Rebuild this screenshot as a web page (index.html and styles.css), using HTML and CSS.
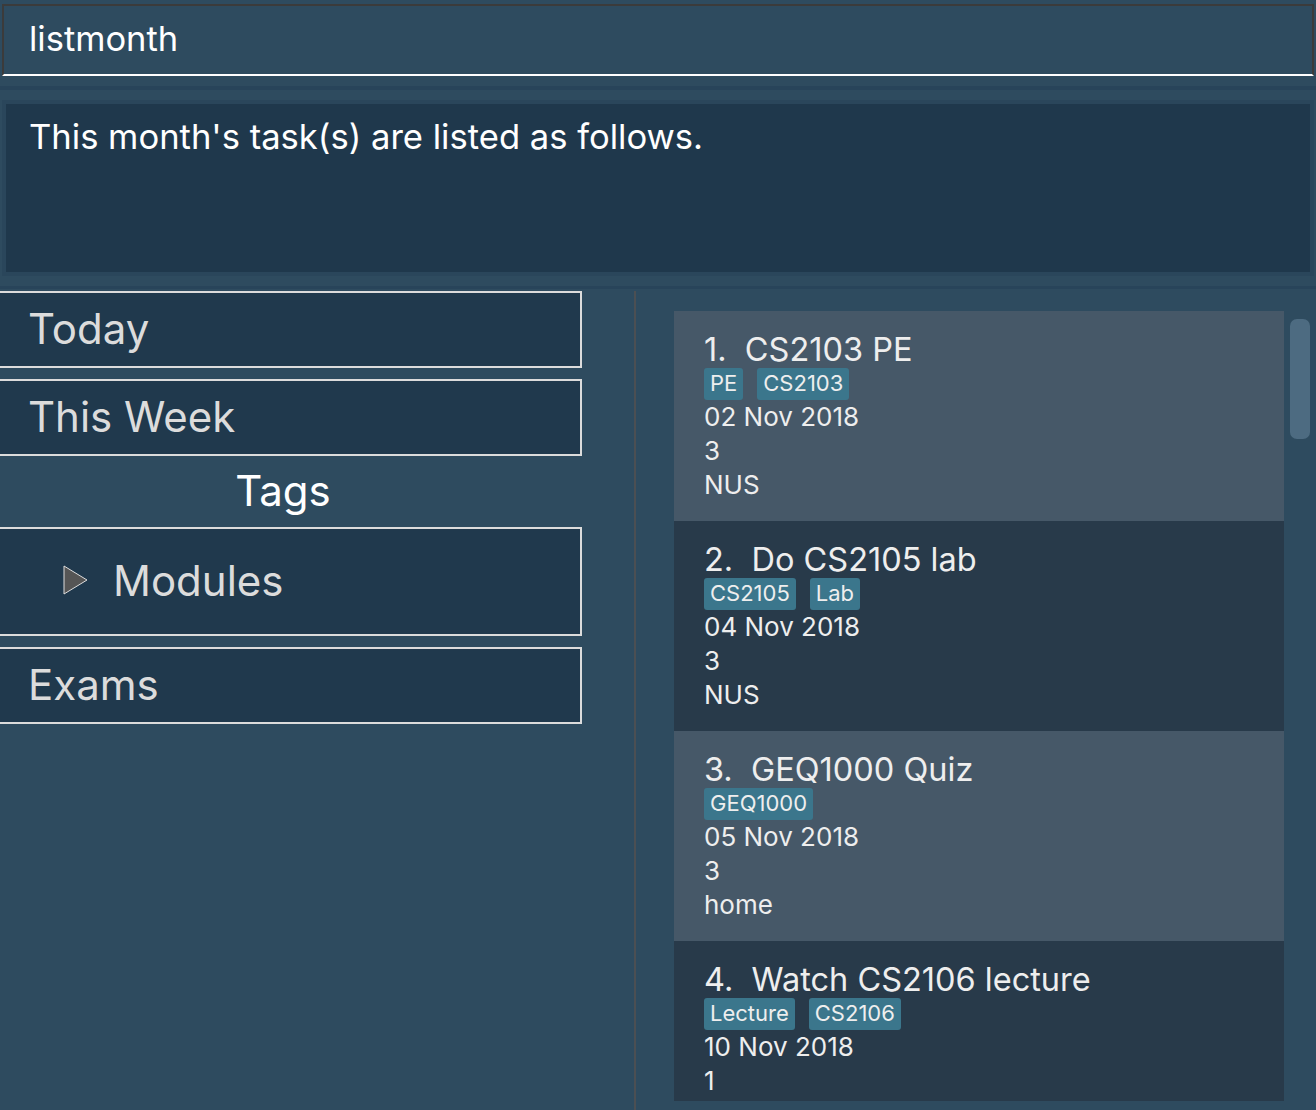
FILE: index.html
```html
<!DOCTYPE html>
<html>
<head>
<meta charset="utf-8">
<link rel="stylesheet" href="styles.css">
</head>
<body>
<div class="command">listmonth</div>
<div class="band"></div>
<div class="result">This month's task(s) are listed as follows.</div>
<div class="band band2"></div>
<div class="main">
  <div class="left">
    <div class="navbox">Today</div>
    <div class="navbox">This Week</div>
    <div class="tags-label">Tags</div>
    <div class="navbox tree">
      <svg class="arrow" width="26" height="30" viewBox="0 0 26 30"><polygon points="1,1 24,15 1,29" fill="#555555" stroke="#dddddd" stroke-width="1"/></svg>
      <span>Modules</span>
    </div>
    <div class="navbox">Exams</div>
  </div>
  <div class="divider"></div>
  <div class="right">
    <div class="list">
      <div class="card odd">
        <div class="title">1.&nbsp;&nbsp;CS2103 PE</div>
        <div class="tags"><span class="tag">PE</span><span class="tag">CS2103</span></div>
        <div class="line">02 Nov 2018</div>
        <div class="line">3</div>
        <div class="line">NUS</div>
      </div>
      <div class="card even">
        <div class="title">2.&nbsp;&nbsp;Do CS2105 lab</div>
        <div class="tags"><span class="tag">CS2105</span><span class="tag">Lab</span></div>
        <div class="line">04 Nov 2018</div>
        <div class="line">3</div>
        <div class="line">NUS</div>
      </div>
      <div class="card odd">
        <div class="title">3.&nbsp;&nbsp;GEQ1000 Quiz</div>
        <div class="tags"><span class="tag">GEQ1000</span></div>
        <div class="line">05 Nov 2018</div>
        <div class="line">3</div>
        <div class="line">home</div>
      </div>
      <div class="card even">
        <div class="title">4.&nbsp;&nbsp;Watch CS2106 lecture</div>
        <div class="tags"><span class="tag">Lecture</span><span class="tag">CS2106</span></div>
        <div class="line">10 Nov 2018</div>
        <div class="line">1</div>
      </div>
    </div>
    <div class="scrollbar"><div class="thumb"></div></div>
  </div>
</div>
</body>
</html>
```

FILE: styles.css
```css
html, body {
  margin: 0;
  padding: 0;
  height: 100%;
  overflow: hidden;
}
body {
  background: #2e4b5f;
  font-family: Inter, Roboto, "Liberation Sans", sans-serif;
  color: #ffffff;
  display: flex;
  flex-direction: column;
}
.command {
  margin: 4px 2px 0 2px;
  height: 68px;
  border: 2px solid #3b3b3b;
  border-bottom: 2px solid #ffffff;
  padding-left: 25px;
  font-size: 34.5px;
  line-height: 66px;
  color: #ffffff;
  flex: none;
}
.band {
  margin-top: 10px;
  height: 4px;
  background: #28445a;
  flex: none;
}
.band2 {
  margin-top: 10px;
  height: 3px;
}
.result {
  margin: 10px 2px 0 2px;
  border: 4px solid #2a465b;
  background: #1f384c;
  padding: 10px 0 0 23px;
  box-sizing: border-box;
  height: 176px;
  font-size: 34.6px;
  line-height: 44px;
  flex: none;
}
.main {
  flex: 1;
  display: flex;
  margin-top: 2px;
  min-height: 0;
}
.left {
  width: 584px;
  margin-left: -2px;
  display: flex;
  flex-direction: column;
  flex: none;
}
.navbox {
  border: 2px solid #dcdcdc;
  background: #20394d;
  padding-left: 28px;
  padding-bottom: 3px;
  box-sizing: content-box;
  height: 70px;
  font-size: 42px;
  color: #dcdcdc;
  margin-bottom: 11px;
  display: flex;
  align-items: center;
}
.tags-label {
  text-align: center;
  font-size: 42px;
  color: #ffffff;
  height: 62px;
  line-height: 52px;
  margin-top: -11px;
  padding-top: 9px;
  padding-right: 14px;
}
.tree {
  height: 102px;
  padding-left: 63px;
}
.tree .arrow {
  margin-right: 24px;
}
.divider {
  width: 2px;
  background: #4b4f53;
  margin-left: 52px;
  flex: none;
}
.right {
  flex: 1;
  display: flex;
  padding-left: 38px;
  padding-top: 20px;
  padding-bottom: 9px;
  min-height: 0;
}
.list {
  width: 610px;
  display: flex;
  flex-direction: column;
  overflow: hidden;
}
.card {
  height: 210px;
  flex: none;
  box-sizing: border-box;
  padding: 20px 0 0 30px;
  color: #eeeeee;
}
.odd { background: #465868; }
.even { background: #283a4a; }
.title {
  font-size: 32.5px;
  line-height: 38px;
}
.tags {
  display: flex;
  gap: 14px;
  margin-top: -1px;
  height: 32px;
}
.tag {
  background: #3b768c;
  border-radius: 3px;
  font-size: 22px;
  line-height: 31px;
  padding: 0 6px;
  color: #eeeeee;
}
.line {
  font-size: 26px;
  line-height: 34px;
}
.scrollbar {
  width: 20px;
  margin-left: 6px;
  padding-top: 8px;
}
.thumb {
  height: 120px;
  background: #4d6b81;
  border-radius: 7px;
}
```
